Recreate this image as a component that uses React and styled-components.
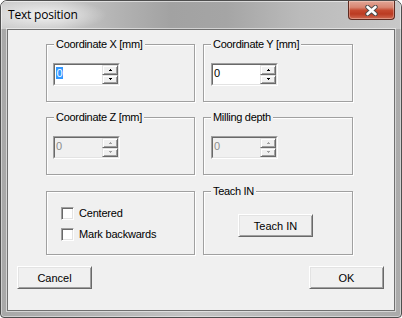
import React from 'react';
import styled, { createGlobalStyle } from 'styled-components';

const Global = createGlobalStyle`
  html, body { margin: 0; padding: 0; background: #ffffff; }
  body {
    width: 402px; height: 318px; overflow: hidden;
    font-family: "Liberation Sans", Arial, sans-serif;
    font-size: 11px; color: #000;
  }
`;

const Window = styled.div`
  box-sizing: border-box;
  width: 402px;
  height: 318px;
  display: flex;
  flex-direction: column;
  border: 1px solid #4e4e4e;
  border-radius: 7px 7px 4px 4px;
  overflow: hidden;
  background: linear-gradient(90deg, #a8a8a8 0px, #b3b3b3 90px, #c3c3c3 190px, #b7b7b7 290px, #aaaaaa 402px);
  box-shadow: inset 0 0 0 1px rgba(255, 255, 255, 0.45);
`;

const TitleBar = styled.div`
  height: 28px;
  flex: none;
  display: flex;
  align-items: flex-start;
  justify-content: space-between;
  padding: 0 6px 0 7px;
  background:
    radial-gradient(ellipse 62px 16px at 44px 14px, rgba(255,255,255,0.75), rgba(255,255,255,0) 100%),
    linear-gradient(90deg, #cecece 0px, #c8c8c8 60px, #b2b2b2 120px, #a2a2a2 170px, #a5a5a5 225px, #bbbbbb 300px, #c8c8c8 400px);
  box-shadow: inset 1px 1px 0 rgba(255,255,255,0.55), inset -1px 0 0 rgba(255,255,255,0.45);
`;

const TitleText = styled.div`
  font-family: "Open Sans", "Noto Sans", sans-serif;
  font-size: 12px;
  letter-spacing: -0.2px;
  line-height: 16px;
  margin-top: 6px;
  color: #000;
`;

const CloseBtn = styled.div`
  box-sizing: border-box;
  width: 47px;
  height: 19px;
  border: 1px solid #5e2a20;
  border-top: none;
  border-radius: 0 0 4px 4px;
  background: linear-gradient(180deg, #e2a696 0%, #d88672 35%, #c5492f 52%, #bb3b22 72%, #cf6a52 100%);
  box-shadow: inset 0 0 0 1px rgba(255, 235, 225, 0.35);
  display: flex;
  align-items: center;
  justify-content: center;
`;

const Client = styled.div`
  flex: 1;
  margin: 0 6px 6px;
  border: 1px solid #707070;
  background: #f0f0f0;
  box-shadow: 0 0 0 1px rgba(255, 255, 255, 0.5);
  display: flex;
  flex-direction: column;
  padding-top: 14px;
`;

const Grid = styled.div`
  display: grid;
  grid-template-columns: 149px 150px;
  grid-template-rows: 58px 58px 65px;
  column-gap: 8px;
  row-gap: 15px;
  margin-left: 38px;
`;

const Group = styled.div`
  position: relative;
  box-sizing: border-box;
  border: 1px solid #a0a0a0;
  box-shadow: inset 1px 1px 0 #ffffff, 1px 1px 0 #ffffff;
  margin-top: ${p => p.$shift || 0}px;
  padding: ${p => p.$pad || '18px 0 0 6px'};
  display: flex;
  flex-direction: column;
  align-items: flex-start;
  gap: ${p => p.$gap || 0}px;
`;

const Legend = styled.span`
  position: absolute;
  top: -7px;
  left: 7px;
  padding: 0 2px;
  background: #f0f0f0;
  line-height: 13px;
  letter-spacing: -0.3px;
  white-space: nowrap;
`;

const SpinOuter = styled.div`
  box-sizing: border-box;
  width: 67px;
  height: 23px;
  border: 1px solid;
  border-color: #a0a0a0 #ffffff #ffffff #a0a0a0;
  display: flex;
`;

const SpinInner = styled.div`
  flex: 1;
  display: flex;
  border: 1px solid;
  border-color: #696969 #e3e3e3 #e3e3e3 #696969;
  background: ${p => (p.$disabled ? '#f0f0f0' : '#ffffff')};
`;

const Field = styled.div`
  flex: 1;
  padding: 2px 0 0 1px;
  line-height: 12px;
  color: ${p => (p.$disabled ? '#8c8c8c' : '#000')};
`;

const Selected = styled.span`
  display: inline-block;
  background: #3399ff;
  color: #ffffff;
  padding: 0 0.5px 0 0.5px;
  line-height: 12px;
`;

const Arrows = styled.div`
  width: 16px;
  display: flex;
  flex-direction: column;
`;

const ArrowBtn = styled.div`
  flex: 1;
  box-sizing: border-box;
  background: #f0f0f0;
  border: 1px solid;
  border-color: #e3e3e3 #696969 #696969 #e3e3e3;
  box-shadow: inset 1px 1px 0 #ffffff, inset -1px -1px 0 #a0a0a0;
  display: flex;
  align-items: center;
  justify-content: center;
`;

const CheckRow = styled.label`
  display: flex;
  align-items: center;
  gap: 5px;
  line-height: 13px;
  letter-spacing: -0.2px;
`;

const CheckBox = styled.span`
  box-sizing: border-box;
  width: 13px;
  height: 13px;
  border: 1px solid;
  border-color: #a0a0a0 #ffffff #ffffff #a0a0a0;
  box-shadow: inset 1px 1px 0 #696969, inset -1px -1px 0 #e3e3e3;
  background: #ffffff;
  flex: none;
`;

const PushButton = styled.button`
  box-sizing: border-box;
  width: 75px;
  height: 23px;
  padding: 0;
  margin: 0;
  font-family: "Liberation Sans", Arial, sans-serif;
  font-size: 11px;
  color: #000;
  background: #f0f0f0;
  border: 1px solid;
  border-color: #ffffff #696969 #696969 #ffffff;
  box-shadow: inset 1px 1px 0 #e3e3e3, inset -1px -1px 0 #a0a0a0;
  border-radius: 0;
  outline: none;
`;

const ButtonRow = styled.div`
  display: flex;
  justify-content: space-between;
  margin-top: 11px;
  padding: 0 10px 0 9px;
`;

function Arrow({ dir, disabled }) {
  const c = disabled ? '#a0a0a0' : '#000';
  const rows = dir === 'up'
    ? [[1, 0, 1], [0, 1, 3]]
    : [[0, 0, 3], [1, 1, 1]];
  return (
    <svg width="3" height="2" viewBox="0 0 3 2" shapeRendering="crispEdges">
      {rows.map(([x, y, w], i) => (
        <rect key={i} x={x} y={y} width={w} height="1" fill={c} />
      ))}
    </svg>
  );
}

function Spinner({ value, selected, disabled }) {
  return (
    <SpinOuter>
      <SpinInner $disabled={disabled}>
        <Field $disabled={disabled}>
          {selected ? <Selected>{value}</Selected> : value}
        </Field>
        <Arrows>
          <ArrowBtn><Arrow dir="up" disabled={disabled} /></ArrowBtn>
          <ArrowBtn><Arrow dir="down" disabled={disabled} /></ArrowBtn>
        </Arrows>
      </SpinInner>
    </SpinOuter>
  );
}

export default function App() {
  return (
    <>
      <Global />
      <Window>
        <TitleBar>
          <TitleText>Text position</TitleText>
          <CloseBtn>
            <svg width="13" height="11" viewBox="0 0 13 11">
              <path d="M2.5 2 L10.5 9 M10.5 2 L2.5 9" stroke="#4a4a4a" strokeWidth="4.4" strokeLinecap="round" fill="none" />
              <path d="M2.5 2 L10.5 9 M10.5 2 L2.5 9" stroke="#ffffff" strokeWidth="2.6" strokeLinecap="round" fill="none" />
            </svg>
          </CloseBtn>
        </TitleBar>
        <Client>
          <Grid>
            <Group>
              <Legend>Coordinate X [mm]</Legend>
              <Spinner value="0" selected />
            </Group>
            <Group $pad="18px 0 0 7px">
              <Legend>Coordinate Y [mm]</Legend>
              <Spinner value="0" />
            </Group>
            <Group>
              <Legend>Coordinate Z [mm]</Legend>
              <Spinner value="0" disabled />
            </Group>
            <Group $pad="18px 0 0 7px">
              <Legend>Milling depth</Legend>
              <Spinner value="0" disabled />
            </Group>
            <Group $shift={1} $pad="15px 0 0 14px" $gap={8}>
              <CheckRow><CheckBox />Centered</CheckRow>
              <CheckRow><CheckBox />Mark backwards</CheckRow>
            </Group>
            <Group $shift={1} $pad="22px 0 0 34px">
              <Legend>Teach IN</Legend>
              <PushButton>Teach IN</PushButton>
            </Group>
          </Grid>
          <ButtonRow>
            <PushButton>Cancel</PushButton>
            <PushButton>OK</PushButton>
          </ButtonRow>
        </Client>
      </Window>
    </>
  );
}
